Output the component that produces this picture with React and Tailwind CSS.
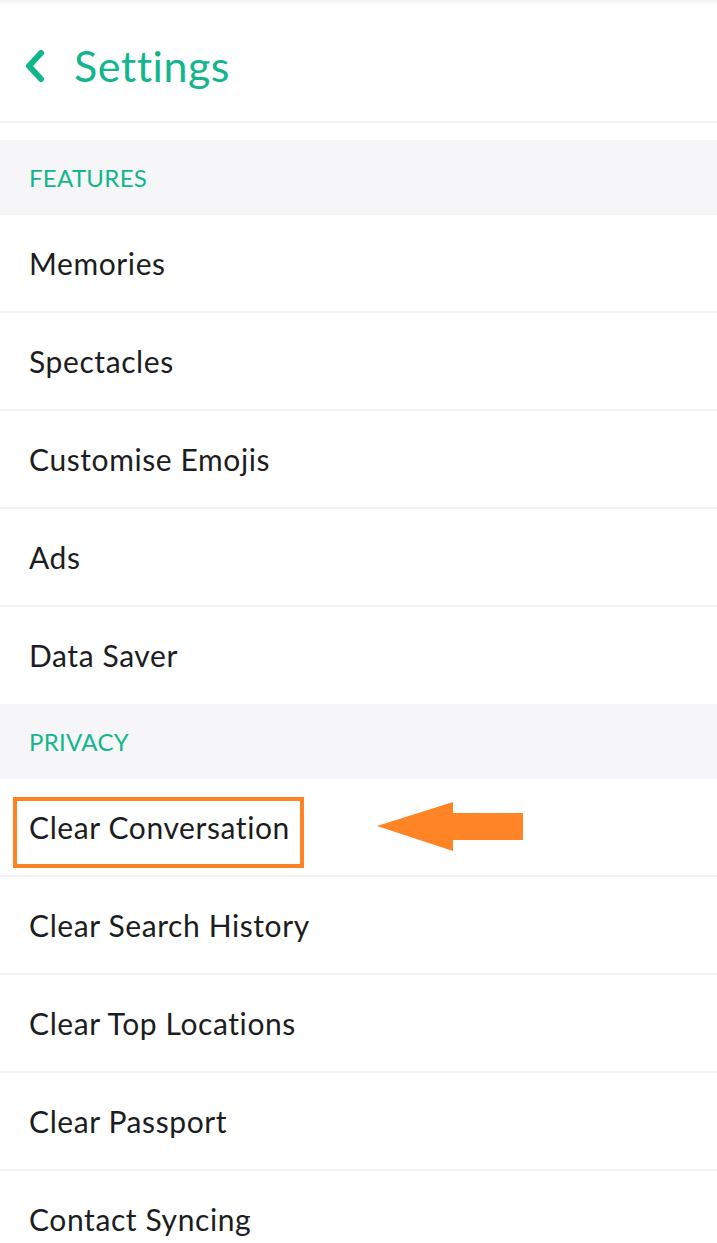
import React from "react";

const features = ["Memories", "Spectacles", "Customise Emojis", "Ads", "Data Saver"];
const privacy = ["Clear Conversation", "Clear Search History", "Clear Top Locations", "Clear Passport", "Contact Syncing"];

function SectionHeader({ title }) {
  return (
    <div className="h-[75px] bg-[#f6f6f8] flex items-center pl-[29px]">
      <span className="text-[24px] text-[#11b68d] tracking-[0.3px]">{title}</span>
    </div>
  );
}

function Row({ label, highlight }) {
  return (
    <div className="relative h-[98px] flex items-center pl-[29px] border-b-2 border-[#f3f3f5] last:border-b-0 last:h-[97px]">
      <span className="text-[30px] text-[#1b1d20] tracking-[0.6px]">{label}</span>
      {highlight && (
        <>
          <div className="absolute left-[13px] top-[18px] w-[291px] h-[71px] border-[4px] border-[#ff8227]" />
          <svg className="absolute left-[376px] top-[23px]" width="150" height="52" viewBox="0 0 150 52">
            <path d="M1 24 L77 0 L77 11 L147 11 L147 38 L77 38 L77 49 Z" fill="#ff8426" />
          </svg>
        </>
      )}
    </div>
  );
}

export default function App() {
  return (
    <div className="w-[717px] h-[1243px] overflow-hidden bg-white" style={{ fontFamily: "Lato, 'Noto Sans', sans-serif" }}>
      <div className="h-[6px] bg-gradient-to-b from-[#f2f2f4] to-white" />
      <div className="h-[117px] flex items-center pl-[24px] pt-[5px] border-b-2 border-[#f4f4f6]">
        <svg width="22" height="34" viewBox="0 0 22 34" className="mr-[28px]">
          <path d="M17 4 L5 17 L17 30" fill="none" stroke="#11b68d" strokeWidth="6" strokeLinecap="round" strokeLinejoin="round" />
        </svg>
        <span className="text-[43px] text-[#11b68d] tracking-[0.5px]">Settings</span>
      </div>
      <div className="h-[17px]" />
      <SectionHeader title="FEATURES" />
      <div>
        {features.map((f) => (
          <Row key={f} label={f} />
        ))}
      </div>
      <SectionHeader title="PRIVACY" />
      <div>
        {privacy.map((f, i) => (
          <Row key={f} label={f} highlight={i === 0} />
        ))}
      </div>
    </div>
  );
}
